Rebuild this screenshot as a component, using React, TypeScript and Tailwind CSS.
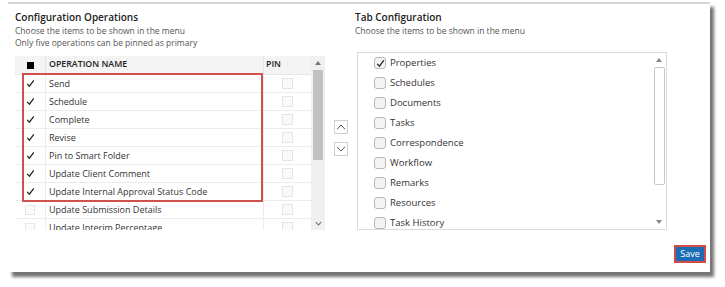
import React from "react";

const ops = [
  { name: "Send", checked: true },
  { name: "Schedule", checked: true },
  { name: "Complete", checked: true },
  { name: "Revise", checked: true },
  { name: "Pin to Smart Folder", checked: true },
  { name: "Update Client Comment", checked: true },
  { name: "Update Internal Approval Status Code", checked: true },
  { name: "Update Submission Details", checked: false },
  { name: "Update Interim Percentage", checked: false },
];

const tabs = [
  { name: "Properties", checked: true },
  { name: "Schedules", checked: false },
  { name: "Documents", checked: false },
  { name: "Tasks", checked: false },
  { name: "Correspondence", checked: false },
  { name: "Workflow", checked: false },
  { name: "Remarks", checked: false },
  { name: "Resources", checked: false },
  { name: "Task History", checked: false },
];

function Check({ className = "" }: { className?: string }) {
  return (
    <svg width="9" height="9" viewBox="0 0 9 9" className={className}>
      <path d="M1.2 4.8 L3.4 7.2 L7.8 1.4" fill="none" stroke="#222" strokeWidth="1.2" />
    </svg>
  );
}

function TriUp({ color = "#666" }: { color?: string }) {
  return (
    <svg width="6" height="4" viewBox="0 0 6 4">
      <polygon points="0,4 3,0 6,4" fill={color} />
    </svg>
  );
}

function TriDown({ color = "#666" }: { color?: string }) {
  return (
    <svg width="6" height="4" viewBox="0 0 6 4">
      <polygon points="0,0 6,0 3,4" fill={color} />
    </svg>
  );
}

export default function App() {
  return (
    <div className="w-[725px] h-[287px] bg-white overflow-hidden font-['Open_Sans',sans-serif] text-[#333]">
      <div className="ml-[8px] mt-[2px] w-[702px] h-[270px] bg-white border-t-2 border-[#d6d6d6] shadow-[4px_5px_3px_rgba(0,0,0,0.55)] flex flex-col">
        <div className="flex pl-[7px] pt-[6px]">
          {/* Left column */}
          <div className="w-[310px] flex flex-col">
            <div className="text-[10px] leading-[15px] font-semibold text-[#222]">Configuration Operations</div>
            <div className="text-[8.5px] leading-[12px] text-[#555]">Choose the items to be shown in the menu</div>
            <div className="text-[8.5px] leading-[12px] text-[#555]">Only five operations can be pinned as primary</div>
            <div className="mt-[7px] h-[174px] flex relative overflow-hidden">
              <div className="w-[296px] flex flex-col">
                <div className="h-[19px] shrink-0 bg-[#f4f4f4] flex items-center border-b border-[#e6e6e6]">
                  <div className="w-[30px] flex justify-center">
                    <div className="w-[7px] h-[7px] bg-black" />
                  </div>
                  <div className="w-[218px] h-full flex items-center pl-[3px] border-l border-[#e4e4e4] text-[8.8px] font-semibold text-[#222]">
                    OPERATION NAME
                  </div>
                  <div className="w-[48px] h-full flex items-center pl-[2px] border-l border-[#e4e4e4] text-[8.8px] font-semibold text-[#222]">
                    PIN
                  </div>
                </div>
                {ops.map((o) => (
                  <div key={o.name} className="h-[18px] shrink-0 flex items-center border-b border-[#ececec]">
                    <div className="w-[30px] h-full flex items-center justify-center">
                      {o.checked ? (
                        <Check />
                      ) : (
                        <div className="w-[10px] h-[10px] border border-[#e6e6e6] bg-[#fbfbfb]" />
                      )}
                    </div>
                    <div className="w-[218px] h-full flex items-center pl-[3px] border-l border-[#ececec] text-[9px] whitespace-nowrap">
                      {o.name}
                    </div>
                    <div className="w-[48px] h-full flex items-center justify-center border-l border-[#ececec]">
                      <div className="w-[11px] h-[11px] border border-[#e4e4e4] bg-[#fafafa]" />
                    </div>
                  </div>
                ))}
              </div>
              <div className="w-[14px] bg-[#f0f0f0] flex flex-col items-center">
                <div className="h-[14px] flex items-center justify-center">
                  <TriUp color="#777" />
                </div>
                <div className="w-[10px] h-[90px] bg-[#c1c1c1]" />
                <div className="flex-1" />
                <div className="h-[14px] flex items-center justify-center">
                  <svg width="7" height="5" viewBox="0 0 7 5">
                    <path d="M0.8 1 L3.5 4 L6.2 1" fill="none" stroke="#666" strokeWidth="1.1" />
                  </svg>
                </div>
              </div>
              <div className="absolute left-[7px] top-[17px] w-[241px] h-[129px] border-2 border-[#d0504e]" />
            </div>
          </div>

          {/* Arrow buttons */}
          <div className="ml-[9px] w-[14px] pt-[110px] flex flex-col gap-[8px]">
            <div className="w-[14px] h-[14px] border border-[#cfcfcf] bg-white flex items-center justify-center">
              <svg width="10" height="6" viewBox="0 0 10 6">
                <path d="M1 5.2 L5 1 L9 5.2" fill="none" stroke="#555" strokeWidth="1" />
              </svg>
            </div>
            <div className="w-[14px] h-[14px] border border-[#cfcfcf] bg-white flex items-center justify-center">
              <svg width="10" height="6" viewBox="0 0 10 6">
                <path d="M1 0.8 L5 5 L9 0.8" fill="none" stroke="#555" strokeWidth="1" />
              </svg>
            </div>
          </div>

          {/* Right column */}
          <div className="ml-[7px] flex flex-col">
            <div className="text-[10px] leading-[15px] font-semibold text-[#222]">Tab Configuration</div>
            <div className="text-[8.5px] leading-[12px] text-[#555]">Choose the items to be shown in the menu</div>
            <div className="mt-[15px] ml-[2px] w-[310px] h-[178px] border border-[#dadada] flex overflow-hidden">
              <div className="flex-1 pl-[16px] flex flex-col">
                {tabs.map((t) => (
                  <div key={t.name} className="h-[20px] shrink-0 flex items-center">
                    <div className="w-[12px] h-[12px] rounded-[3px] border border-[#b8b8b8] bg-[#f3f3f3] flex items-center justify-center">
                      {t.checked && <Check />}
                    </div>
                    <span className="ml-[4px] text-[9.5px] whitespace-nowrap">{t.name}</span>
                  </div>
                ))}
              </div>
              <div className="w-[12px] mr-[1px] flex flex-col items-center">
                <div className="h-[14px] flex items-center justify-center">
                  <TriUp color="#888" />
                </div>
                <div className="w-[11px] h-[118px] border border-[#c8c8c8] rounded-[2px] bg-white" />
                <div className="flex-1" />
                <div className="h-[14px] flex items-center justify-center">
                  <TriDown color="#888" />
                </div>
              </div>
            </div>
          </div>
        </div>

        <div className="flex justify-end pr-[4px] mt-[15px]">
          <div className="w-[32px] h-[18px] bg-[#1d6db5] border-2 border-[#d24b4b] text-white text-[9px] flex items-center justify-center">
            Save
          </div>
        </div>
      </div>
    </div>
  );
}
